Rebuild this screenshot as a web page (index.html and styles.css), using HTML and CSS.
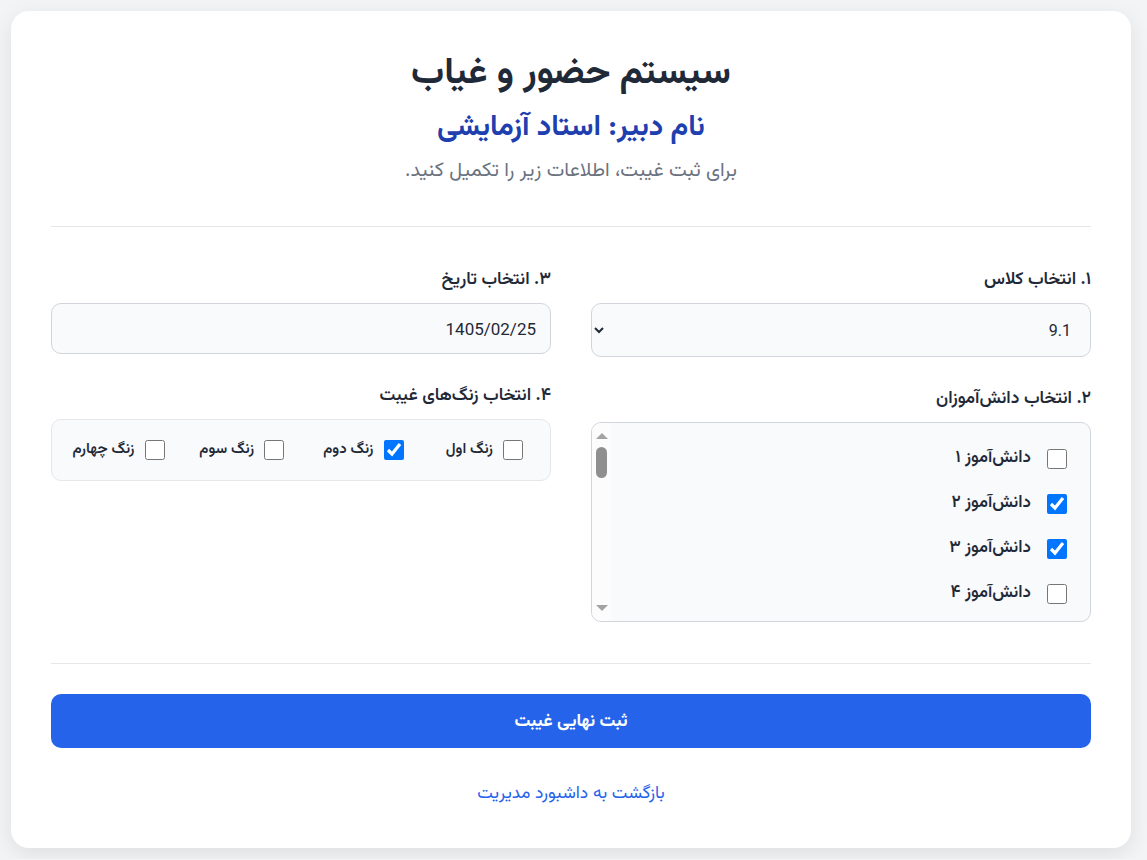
FILE: index.html
```html
<!DOCTYPE html>
<html lang="fa" dir="rtl">
<head>
<meta charset="utf-8">
<title>سیستم حضور و غیاب</title>
<link rel="stylesheet" href="styles.css">
</head>
<body>
<main class="card">
  <header class="head">
    <h1 class="title">سیستم حضور و غیاب</h1>
    <h2 class="teacher">نام دبیر: استاد آزمایشی</h2>
    <p class="desc">برای ثبت غیبت، اطلاعات زیر را تکمیل کنید.</p>
  </header>
  <hr class="sep">
  <form class="form">
    <div class="grid">
      <div class="col">
        <div class="field">
          <label class="lbl" for="cls">۱. انتخاب کلاس</label>
          <select id="cls" class="select">
            <option>9.1</option>
            <option>9.2</option>
          </select>
        </div>
        <div class="field">
          <span class="lbl">۲. انتخاب دانش‌آموزان</span>
          <div class="list-wrap">
            <div class="list">
              <label class="item"><input type="checkbox" class="cb"><span>دانش‌آموز ۱</span></label>
              <label class="item"><input type="checkbox" class="cb" checked><span>دانش‌آموز ۲</span></label>
              <label class="item"><input type="checkbox" class="cb" checked><span>دانش‌آموز ۳</span></label>
              <label class="item"><input type="checkbox" class="cb"><span>دانش‌آموز ۴</span></label>
            </div>
            <div class="sbar" aria-hidden="true">
              <span class="sbar-up"></span>
              <span class="sbar-thumb"></span>
              <span class="sbar-down"></span>
            </div>
          </div>
        </div>
      </div>
      <div class="col">
        <div class="field">
          <label class="lbl" for="date">۳. انتخاب تاریخ</label>
          <input id="date" class="input" type="text" value="1405/02/25">
        </div>
        <div class="field">
          <span class="lbl">۴. انتخاب زنگ‌های غیبت</span>
          <div class="bells">
            <label class="bell"><input type="checkbox" class="cb"><span>زنگ اول</span></label>
            <label class="bell"><input type="checkbox" class="cb" checked><span>زنگ دوم</span></label>
            <label class="bell"><input type="checkbox" class="cb"><span>زنگ سوم</span></label>
            <label class="bell"><input type="checkbox" class="cb"><span>زنگ چهارم</span></label>
          </div>
        </div>
      </div>
    </div>
    <hr class="sep sep-bottom">
    <button type="button" class="submit">ثبت نهایی غیبت</button>
  </form>
  <div class="back"><a href="#" class="back-link">بازگشت به داشبورد مدیریت</a></div>
</main>
</body>
</html>
```

FILE: styles.css
```css
* { box-sizing: border-box; }
html, body { margin: 0; }
body {
  background: #f3f4f6;
  padding: 11px;
  font-family: Vazirmatn, Roboto, "Noto Sans Arabic", "DejaVu Sans", sans-serif;
  color: #1f2937;
}
.card {
  width: 1120px;
  margin: 0 auto 0 0;
  background: #ffffff;
  border-radius: 18px;
  box-shadow: 0 6px 22px rgba(0, 0, 0, 0.09);
  padding: 40px 40px 42px;
}
.head { text-align: center; }
.title {
  margin: 0;
  font-size: 37px;
  line-height: 46px;
  font-weight: 700;
  color: #1f2937;
}
.teacher {
  margin: 13px 0 0;
  font-size: 29px;
  line-height: 36px;
  font-weight: 700;
  color: #1e40af;
}
.desc {
  margin: 11px 0 0;
  font-size: 20px;
  line-height: 28px;
  color: #6b7280;
}
.sep {
  border: 0;
  border-top: 1px solid #e5e7eb;
  margin: 41px 0 41px;
}
.grid {
  display: grid;
  grid-template-columns: 1fr 1fr;
  gap: 40px;
}
.col {
  display: flex;
  flex-direction: column;
  gap: 30px;
}
.field { display: flex; flex-direction: column; }
.lbl {
  font-size: 17.5px;
  line-height: 24px;
  font-weight: 600;
  color: #1f2937;
  margin-bottom: 11px;
}
.select, .input {
  font-family: Roboto, sans-serif;
  color: #1f2937;
  background: #f9fafb;
  border: 1px solid #d1d5db;
  border-radius: 10px;
  width: 100%;
}
.select {
  height: 54px;
  font-size: 16px;
  padding: 0 15px;
}
.input {
  height: 51px;
  font-size: 17px;
  padding: 0 14px;
  direction: rtl;
}
.list-wrap { position: relative; }
.list {
  height: 200px;
  overflow: hidden;
  background: #f9fafb;
  border: 1px solid #d1d5db;
  border-radius: 10px;
  padding: 13px 12px 12px;
}
.item {
  display: flex;
  align-items: center;
  gap: 16px;
  padding: 12px 11px;
  font-size: 17px;
  line-height: 21px;
  font-weight: 600;
  color: #1f2937;
}
.cb {
  width: 20px;
  height: 20px;
  margin: 0;
  flex: none;
}
.sbar {
  position: absolute;
  left: 1px;
  top: 1px;
  bottom: 1px;
  width: 19px;
  background: #fcfcfc;
  border-radius: 9px 0 0 9px;
  display: flex;
  flex-direction: column;
  align-items: center;
  padding: 10px 0 10px;
}
.sbar-up, .sbar-down {
  width: 0;
  height: 0;
  border-left: 6px solid transparent;
  border-right: 6px solid transparent;
}
.sbar-up { border-bottom: 6px solid #a3a3a3; }
.sbar-down { border-top: 6px solid #a3a3a3; margin-top: auto; }
.sbar-thumb {
  width: 11px;
  height: 31px;
  margin-top: 8px;
  border-radius: 6px;
  background: #8f8f8f;
}
.bells {
  display: grid;
  grid-template-columns: repeat(4, 1fr);
  gap: 27px;
  background: #f9fafb;
  border: 1px solid #e5e7eb;
  border-radius: 10px;
  padding: 20px 27px 20px 20px;
}
.bell {
  display: flex;
  align-items: center;
  gap: 10px;
  font-size: 15px;
  line-height: 20px;
  font-weight: 600;
  color: #1f2937;
  white-space: nowrap;
}
.sep-bottom { margin: 41px 0 30px; }
.submit {
  display: block;
  width: 100%;
  height: 54px;
  border: 0;
  border-radius: 10px;
  background: #2563eb;
  color: #ffffff;
  font-family: inherit;
  font-size: 17.5px;
  font-weight: 700;
}
.back {
  text-align: center;
  margin-top: 34px;
  font-size: 17.5px;
  line-height: 24px;
}
.back-link { color: #2563eb; text-decoration: none; }
```
